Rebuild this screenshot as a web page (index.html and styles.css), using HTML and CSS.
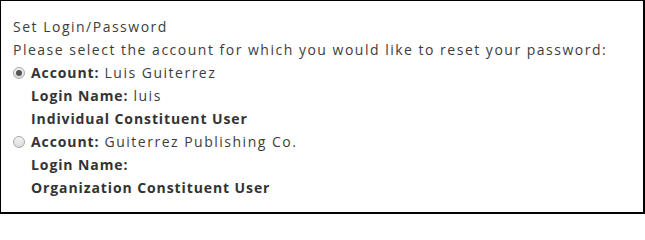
FILE: index.html
```html
<!DOCTYPE html>
<html>
<head>
<meta charset="utf-8">
<link rel="stylesheet" href="styles.css">
</head>
<body>
<div class="panel">
  <div class="title">Set Login/Password</div>
  <div class="intro">Please select the account for which you would like to reset your password:</div>
  <div class="account">
    <div class="row"><span class="radio checked"></span><span><b>Account:</b> Luis Guiterrez</span></div>
    <div class="sub"><b>Login Name:</b> luis</div>
    <div class="sub"><b>Individual Constituent User</b></div>
  </div>
  <div class="account">
    <div class="row"><span class="radio"></span><span><b>Account:</b> Guiterrez Publishing Co.</span></div>
    <div class="sub"><b>Login Name:</b></div>
    <div class="sub"><b>Organization Constituent User</b></div>
  </div>
</div>
</body>
</html>
```
FILE: styles.css
```css
html, body { margin: 0; padding: 0; background: #fff; }
.panel {
  box-sizing: border-box;
  width: 645px;
  height: 214px;
  border-style: solid;
  border-color: #000;
  border-width: 1px 2px 2px 1px;
  padding: 14px 12px 0 12px;
  font-family: "Open Sans", sans-serif;
  font-size: 14px;
  line-height: 23px;
  letter-spacing: 1.5px;
  color: #3d3d3d;
}
.panel b { font-weight: 700; color: #333; letter-spacing: 0.9px; }
.row { display: flex; align-items: center; gap: 6px; }
.sub { padding-left: 18px; }
.radio {
  box-sizing: border-box;
  width: 12px;
  height: 12px;
  border-radius: 50%;
  border: 1px solid #a8a8a8;
  background: linear-gradient(#f4f4f4, #dcdcdc);
  flex: none;
  position: relative;
}
.radio.checked::after {
  content: "";
  position: absolute;
  left: 2px; top: 2px;
  width: 6px; height: 6px;
  border-radius: 50%;
  background: #555;
}
```
